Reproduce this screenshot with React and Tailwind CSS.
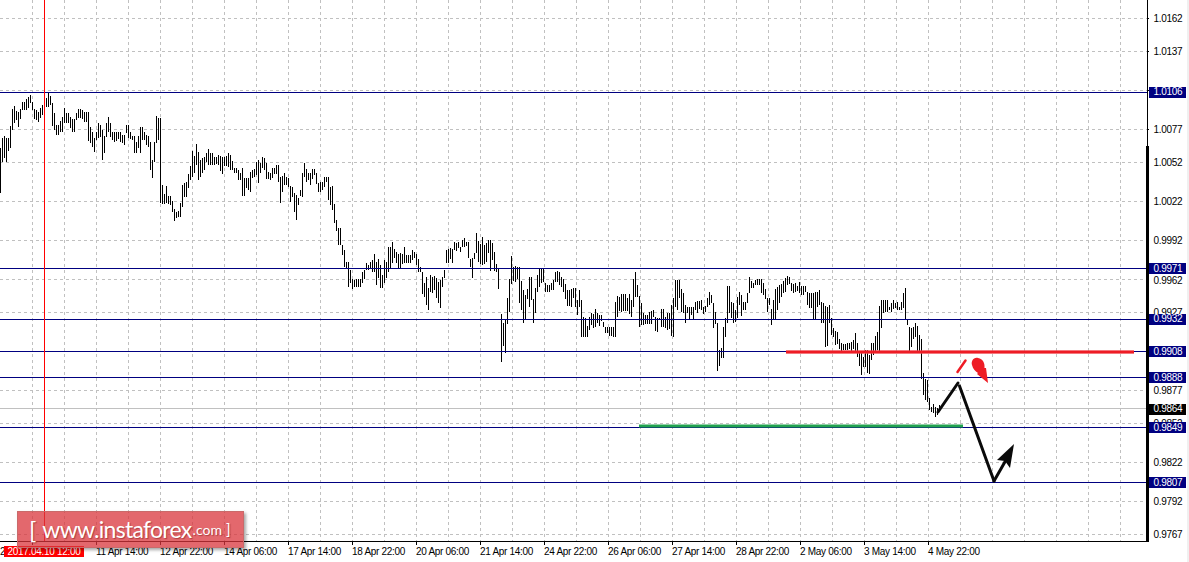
const segments = [
  {
    x: 0,
    y: 80,
    bars: [[205,340],[175,245],[168,235],[175,245],[175,213],[138,205],[88,150],[78,130],[92,120],[95,140],[88,118],[67,90],[65,90],[58,90],[50,85],[45,68],[65,90],[88,118],[90,120],[97,125],[85,115],[75,105],[70,100],[55,80],[35,80],[48,75],[68,138],[100,150],[135,165],[135,165],[122,155],[112,155],[85,130],[100,130],[98,130],[110,145],[118,155],[118,155],[100,120],[88,115],[88,115],[90,118],[97,125],[97,125],[95,183],[142,190],[155,200],[175,215],[155,180],[128,175],[135,170],[150,240],[168,218],[130,170],[112,155],[130,172],[155,180],[155,185],[155,182],[155,178],[155,185],[165,190],[165,195],[135,160],[135,175],[155,178],[168,180],[168,218],[185,218],[168,205],[142,220],[142,180],[155,180],[165,195],[168,200],[185,270],[240,293],[185,245],[108,190],[115,180],[115,370],[315,372],[342,372],[318,370],[348,372],[348,375],[362,395],[388,422],[395,415],[392,412],[368,410],[315,380],[308,350],[305,352],[282,325],[258,300],[212,290],[228,280],[192,255],[215,300],[240,290],[235,280],[232,270],[218,245],[208,255],[218,255],[220,255],[230,255],[230,252],[225,255],[228,272],[232,282],[232,258],[228,258],[220,260],[225,270],[242,270],[265,280],[265,280],[270,300],[278,300],[265,347],[295,347],[295,325],[295,330],[275,335],[270,295],[268,290],[245,285],[240,310],[248,280],[232,265],[235,270],[248,298],[275,298],[278,300],[265,295],[265,282],[255,282],[255,305],[290,368],[288,335],[278,315],[290,315],[295,320],[318,365],[322,350],[340,395],[345,420],[355,375],[330,348],[280,350],[250,290],[268,305],[280,300],[280,315],[268,298],[268,285],[280,312],[308,335],[305,335],[305,330],[290,320],[290,305],[290,360],[320,375],[318,390],[372,430]],
  },
  {
    x: 336,
    y: 220,
    bars: [[0,32],[25,75],[25,75],[75,105],[90,140],[125,145],[125,200],[150,190],[178,208],[180,200],[178,200],[178,200],[178,200],[155,190],[150,178],[130,150],[135,150],[125,148],[120,155],[102,155],[125,195],[118,175],[135,205],[165,205],[120,190],[125,175],[82,155],[82,145],[65,130],[88,115],[95,130],[102,145],[98,145],[102,132],[82,130],[105,130],[105,130],[105,128],[90,120],[95,115],[102,135],[118,155],[142,155],[155,222],[190,230],[172,255],[205,270],[165,215],[170,218],[168,210],[175,235],[185,250],[180,265],[170,200],[150,175],[90,130],[88,130],[85,118],[88,130],[65,90],[68,92],[65,85],[80,95],[60,82],[55,80],[65,78],[65,115],[118,142],[115,175],[100,118],[38,100],[62,125],[72,132],[52,135],[75,132],[68,125],[60,100],[60,152],[68,120],[95,152],[132,155],[145,208]],
  },
  {
    x: 501,
    y: 220,
    bars: [[282,425],[310,378],[298,400],[235,312],[178,275],[108,192],[140,182],[138,185],[142,178],[142,248],[182,270],[210,308],[225,298],[208,238],[170,262],[170,240],[238,308],[205,278],[165,215],[145,200],[148,188],[145,185],[190,215],[195,215],[195,215],[190,210],[180,210],[155,185],[152,185],[155,195],[170,200],[178,215],[192,238],[210,258],[210,258],[208,262],[205,235],[205,262],[240,285],[210,262],[240,352],[292,352],[295,350],[318,350],[290,330],[278,315],[282,325],[268,322],[280,308],[285,318],[285,302],[305,322],[320,340],[320,340],[322,348],[322,348],[320,352],[245,350],[228,290],[232,272],[222,275],[222,272],[222,272],[235,272],[222,282],[240,290],[178,262],[155,232],[195,232],[228,320],[250,315],[280,315],[285,312],[285,312],[275,312],[272,312],[270,290],[290,332],[295,335],[295,300],[268,322],[268,320],[290,325],[280,330],[280,328],[255,348],[235,350],[180,262],[180,270]],
  },
  {
    x: 679,
    y: 260,
    bars: [[60,115],[88,155],[100,160],[135,188],[140,160],[140,178],[140,165],[140,178],[125,150],[122,158],[122,148],[120,150],[140,163],[138,155],[115,140],[97,135],[105,130],[130,205],[155,192],[190,332],[270,318],[265,295],[200,295],[175,232],[78,188],[78,160],[125,175],[128,188],[150,185],[110,175],[97,135],[105,168],[125,150],[125,150],[100,128],[52,98],[62,85],[68,85],[60,75],[58,75],[58,75],[58,100],[70,105],[88,118],[115,155],[115,135],[148,195],[120,180],[88,180],[82,150],[75,128],[72,110],[62,100],[55,95],[48,75],[52,72],[68,92],[72,98],[68,95],[78,92],[65,100],[78,105],[78,105],[78,95],[95,135],[100,145],[100,145],[100,178],[95,178],[95,140],[90,135],[125,190],[128,188],[138,262],[140,258],[135,190],[175,225],[205,230],[212,255],[215,252],[238,268],[250,272],[252,270],[252,270],[250,270],[250,268],[245,272],[240,268],[220,280],[250,290],[278,318],[280,345],[290,320],[270,320],[270,340],[285,342],[250,300],[250,285],[228,275],[215,270],[138,272],[120,205],[120,160],[120,155],[120,155],[140,150],[128,155],[120,148],[128,145],[125,150],[140,150],[125,150],[100,145],[85,178],[178,195],[200,280],[205,262],[200,238],[190,230],[198,280],[225,280],[238,358],[340,405],[358,420],[360,425],[415,450],[440,455],[432,458],[440,470],[445,465],[435,450]],
  },
]

const barPath = segments
  .map((seg) =>
    seg.bars
      .map(([top, bottom], i) => {
        const x = seg.x + i * 2 + 0.5
        return `M${x} ${Math.round(seg.y + top / 3)}V${Math.round(seg.y + bottom / 3)}`
      })
      .join('')
  )
  .join('')

const gridYs = [18, 51, 90, 129, 162, 201, 240, 279, 312, 351, 390, 423, 462, 501, 534]
const blueLines = [92, 268, 319, 351, 377, 427, 482]
const gridXs = Array.from({ length: 35 }, (_, i) => (i + 1) * 32)

const prices = [
  { y: 18, label: '1.0162' },
  { y: 51, label: '1.0137' },
  { y: 129, label: '1.0077' },
  { y: 162, label: '1.0052' },
  { y: 201, label: '1.0022' },
  { y: 240, label: '0.9992' },
  { y: 280, label: '0.9962' },
  { y: 312, label: '0.9927' },
  { y: 390, label: '0.9877' },
  { y: 423, label: '0.9852' },
  { y: 462, label: '0.9822' },
  { y: 501, label: '0.9792' },
  { y: 534, label: '0.9767' },
  { y: 91.5, label: '1.0106', tag: 'blue' },
  { y: 268, label: '0.9971', tag: 'blue' },
  { y: 318.5, label: '0.9932', tag: 'blue' },
  { y: 351, label: '0.9908', tag: 'blue' },
  { y: 377, label: '0.9888', tag: 'blue' },
  { y: 408.5, label: '0.9864', tag: 'black' },
  { y: 427, label: '0.9849', tag: 'blue' },
  { y: 482, label: '0.9807', tag: 'blue' },
]

const times = [
  '11 Apr 14:00', '12 Apr 22:00', '14 Apr 06:00', '17 Apr 14:00', '18 Apr 22:00',
  '20 Apr 06:00', '21 Apr 14:00', '24 Apr 22:00', '26 Apr 06:00', '27 Apr 14:00',
  '28 Apr 22:00', '2 May 06:00', '3 May 14:00', '4 May 22:00',
]

const tagStyles = {
  blue: 'bg-[#000080] text-white',
  black: 'bg-black text-white',
}

const Chart = () => (
  <svg width="1189" height="546" className="block">
    {/* Grid */}
    <g stroke="#c0c0c0" strokeWidth="1" strokeDasharray="3 3" shapeRendering="crispEdges">
      {gridXs.map((x) => (
        <line key={x} x1={x + 0.5} y1="0" x2={x + 0.5} y2="541" />
      ))}
      {gridYs.map((y) => (
        <line key={y} x1="0" y1={y + 0.5} x2="1147" y2={y + 0.5} />
      ))}
    </g>
    <line x1="0" y1="408.5" x2="1147" y2="408.5" stroke="#c0c0c0" shapeRendering="crispEdges" />

    {/* Price bars */}
    <path d={barPath} stroke="#000" strokeWidth="1" fill="none" shapeRendering="crispEdges" />

    {/* Levels */}
    <g stroke="#000080" strokeWidth="1" shapeRendering="crispEdges">
      {blueLines.map((y) => (
        <line key={y} x1="0" y1={y + 0.5} x2="1147" y2={y + 0.5} />
      ))}
    </g>
    <line x1="44.5" y1="0" x2="44.5" y2="541" stroke="#ff0000" shapeRendering="crispEdges" />

    {/* Axis */}
    <g fill="#000" shapeRendering="crispEdges">
      <rect x="0" y="541" width="1149" height="1" />
      <rect x="1147" y="0" width="1" height="146" />
      <rect x="1146" y="146" width="3" height="396" />
      {gridYs.map((y) => (
        <rect key={y} x="1148" y={y} width="3" height="1" />
      ))}
      {gridXs.filter((x) => x % 64 === 32 && x <= 928).map((x) => (
        <rect key={x} x={x} y="541" width="1" height="4" />
      ))}
    </g>

    {/* Drawn levels and forecast */}
    <line x1="786" y1="352" x2="1134" y2="352" stroke="#f0525a" strokeWidth="4" opacity="0.6" />
    <line x1="786" y1="352" x2="1134" y2="352" stroke="#ee1c25" strokeWidth="2.5" />
    <line x1="639" y1="426" x2="963" y2="426" stroke="#22a350" strokeWidth="3" />
    <g stroke="#0a0a0a" strokeWidth="3" fill="none" strokeLinecap="round">
      <path d="M938 412L958 383" />
      <path d="M959.500 386L994 481" />
      <path d="M994 481L1006 460" />
    </g>
    <path d="M1014 444L997 460L1005 461L1010 468Z" fill="#0a0a0a" />
    <line x1="957.500" y1="372" x2="965.500" y2="360.500" stroke="#ee1c25" strokeWidth="2.500" strokeLinecap="round" />
    <path d="M978 358C973 357 971 362 972 365C973 369 975 371 978 373L977 374L988 383L986 368L984.500 368C985 363 983 359 978 358Z" fill="#ee1c25" />
  </svg>
)

export default function App() {
  return (
    <div className="relative h-[562px] w-[1189px] overflow-hidden bg-white font-['Liberation_Sans',sans-serif] text-black">
      <Chart />

      {/* Time axis */}
      <div className="flex h-4 text-[10px] leading-[10px] tracking-[-0.3px]">
        <span className="w-1 overflow-hidden pt-[1px]">2</span>
        <span className="h-[11px] w-20 bg-[#ff0000] pt-[0.5px] text-center text-white">2017.04.10 12:00</span>
        <div className="ml-3 flex pt-[0.5px]">
          {times.map((t) => (
            <span key={t} className="w-16 whitespace-nowrap">{t}</span>
          ))}
        </div>
      </div>

      {/* Price axis labels */}
      {prices.map((p) => (
        <span
          key={p.label}
          style={{ top: p.y - 5 }}
          className={`absolute left-[1149px] flex h-[11px] w-[37px] items-center pl-[4.5px] text-[10px] leading-none tracking-[-0.3px] ${tagStyles[p.tag] || 'bg-white'}`}
        >
          {p.label}
        </span>
      ))}
      <div className="absolute right-0 top-0 h-full w-[2px] bg-[#f0f0f0]" />

      {/* Watermark */}
      <div className="absolute left-[17px] top-[511px] flex h-[37px] w-[227px] items-center whitespace-nowrap border border-[#c96a6a] bg-[#d9363c]/75 pl-[11px] font-['Lato',sans-serif] text-white shadow-[2px_2px_3px_rgba(0,0,0,0.35)] [text-shadow:1px_1px_1px_rgba(120,20,20,0.5)]">
        <span className="text-[24px] leading-none">[</span>
        <span className="ml-[6px] text-[23px] leading-none tracking-[-0.7px]">www.instaforex</span>
        <span className="ml-[1px] text-[14px] leading-none">.com</span>
        <span className="ml-[4px] text-[15px] leading-none">]</span>
      </div>
    </div>
  )
}
